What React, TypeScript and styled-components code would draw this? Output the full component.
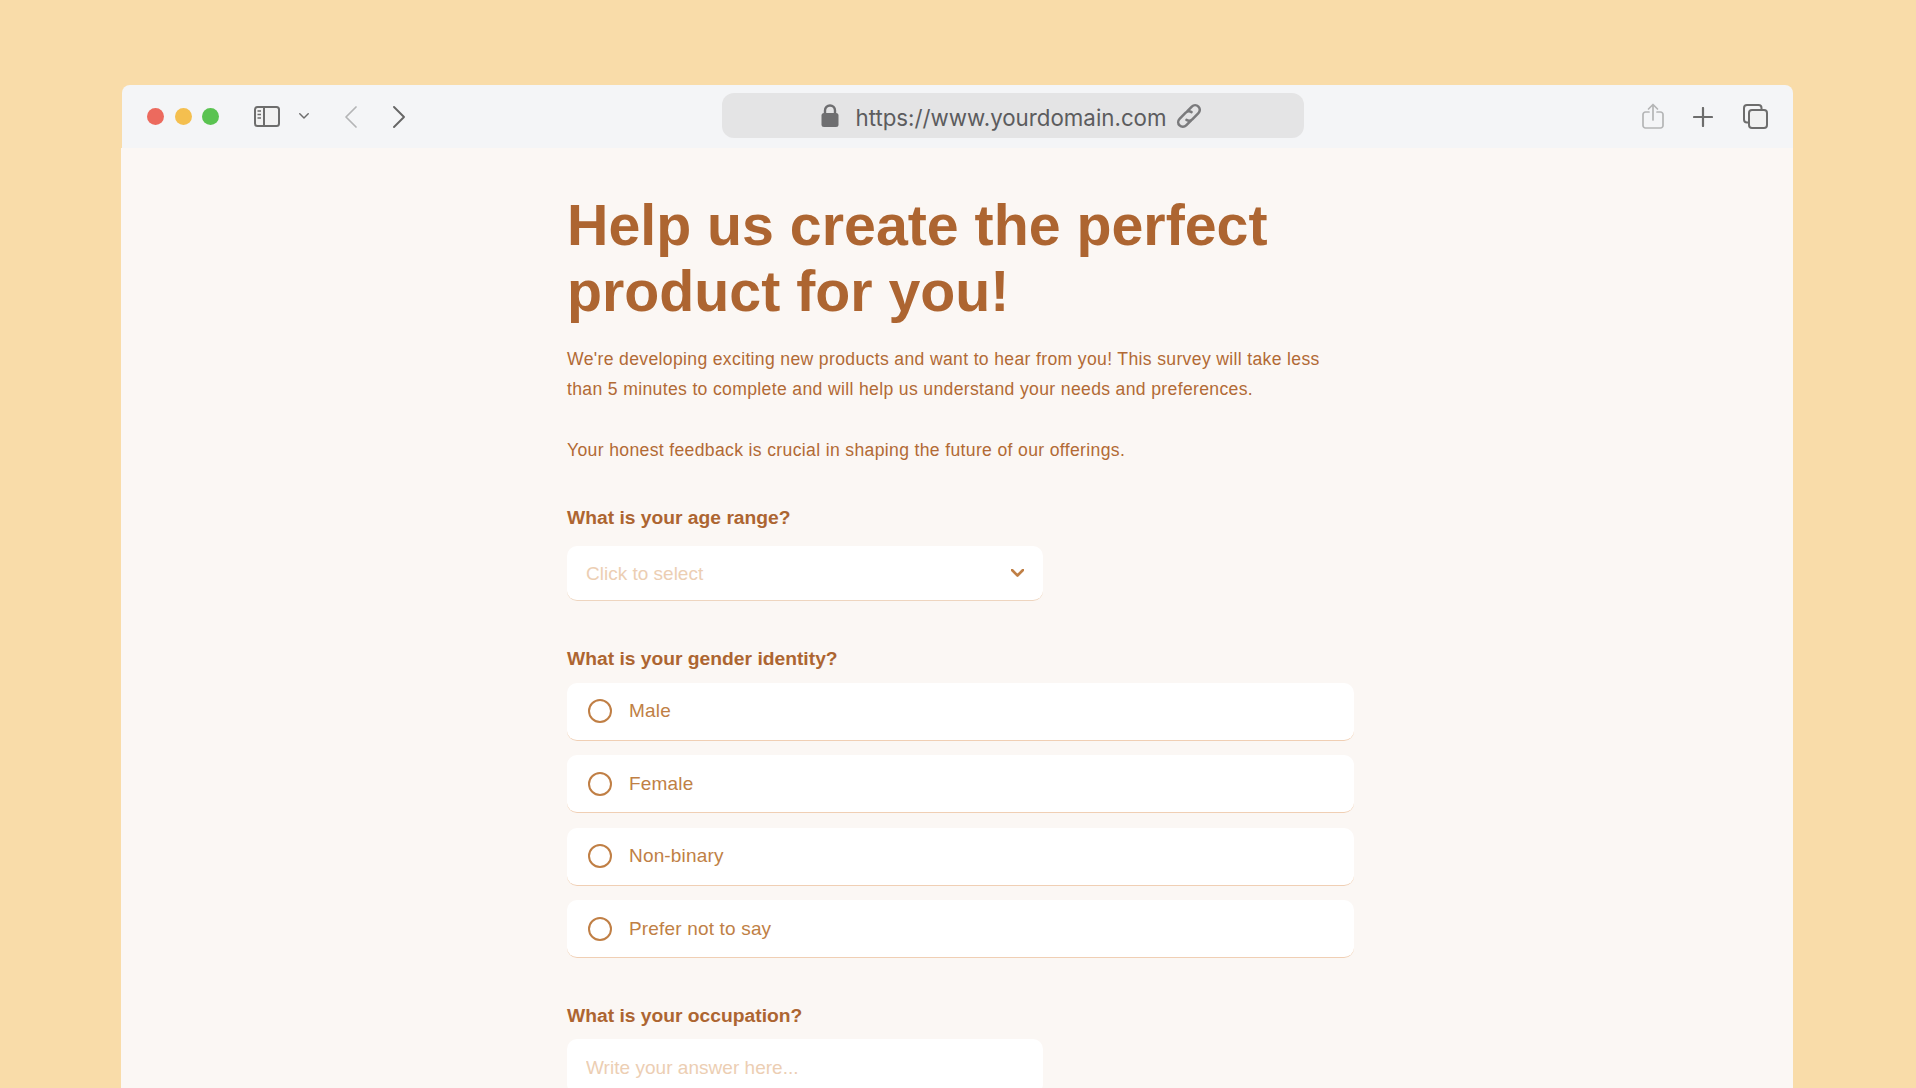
import React from 'react';
import styled, { createGlobalStyle } from 'styled-components';

const GlobalStyle = createGlobalStyle`
  html, body {
    margin: 0;
    height: 100%;
    overflow: hidden;
    background: #f9dca9;
  }
  #root {
    height: 100%;
  }
  * {
    box-sizing: border-box;
  }
`;

const Stage = styled.div`
  height: 100%;
  padding: 85px 123px 0 121px;
  overflow: hidden;
`;

const BrowserWindow = styled.div`
  width: 1672px;
  height: 1100px;
  display: flex;
  flex-direction: column;
`;

const Toolbar = styled.header`
  height: 63px;
  margin-left: 1px;
  border-radius: 8px 8px 0 0;
  background: #f4f5f7;
  display: grid;
  grid-template-columns: 600px 582px 1fr;
  align-items: center;
`;

const ToolGroup = styled.div`
  display: flex;
  align-items: center;
  padding-left: 25px;
`;

const Light = styled.span<{ $color: string }>`
  width: 17px;
  height: 17px;
  border-radius: 50%;
  background: ${({ $color }) => $color};
  margin-right: 10.5px;
`;

const IconSlot = styled.span<{ $left?: number }>`
  display: flex;
  align-items: center;
  justify-content: center;
  margin-left: ${({ $left = 0 }) => $left}px;
  line-height: 0;
`;

const AddressBar = styled.div`
  height: 45px;
  margin-top: -2px;
  border-radius: 12px;
  background: #e4e4e5;
  display: flex;
  align-items: center;
  justify-content: center;
  color: #5c5c5e;
  font-family: 'Inter', 'Liberation Sans', sans-serif;
  font-size: 22.3px;
`;

const AddressText = styled.span`
  margin: 3px 6px 0 16px;
`;

const RightTools = styled.div`
  display: flex;
  align-items: center;
  justify-content: flex-end;
  padding-right: 25px;
`;

const Content = styled.main`
  flex: 1;
  padding: 44px 439px 0 446px;
  background: #fbf7f4;
  color: #b26a35;
  font-family: 'Liberation Sans', Arial, sans-serif;
`;

const Title = styled.h1`
  margin: 0;
  font-size: 57.3px;
  line-height: 66px;
  font-weight: 700;
  color: #ad6531;
`;

const Intro = styled.p`
  margin: 20px 0 0;
  font-size: 17.6px;
  line-height: 30.4px;
  letter-spacing: 0.34px;
`;

const Field = styled.section<{ $top: number }>`
  margin-top: ${({ $top }) => $top}px;
`;

const Question = styled.h2<{ $gap: number }>`
  margin: 0 0 ${({ $gap }) => $gap}px;
  font-size: 19.25px;
  line-height: 24px;
  font-weight: 700;
  color: #ad6531;
`;

const SelectBox = styled.div`
  width: 476px;
  height: 55px;
  padding: 0 19px;
  border-radius: 10px;
  background: #fff;
  border-bottom: 1.5px solid #eed5bf;
  display: flex;
  align-items: center;
  justify-content: space-between;
  font-size: 19px;
  color: #ecceb3;
`;

const SelectValue = styled.span`
  padding-top: 2px;
`;

const OptionList = styled.div`
  display: flex;
  flex-direction: column;
  gap: 14.5px;
`;

const Option = styled.label`
  height: 58px;
  padding: 0 21px;
  border-radius: 10px;
  background: #fff;
  border-bottom: 1.5px solid #f0cfb4;
  display: flex;
  align-items: center;
  gap: 17px;
  font-size: 19px;
  letter-spacing: 0.17px;
  color: #c07f45;
`;

const Radio = styled.span`
  width: 24px;
  height: 24px;
  border-radius: 50%;
  border: 2.8px solid #c07f45;
`;

const TextAnswer = styled.input`
  display: block;
  width: 476px;
  height: 55px;
  padding: 2px 19px 0;
  border: 0;
  border-radius: 10px;
  background: #fff;
  outline: none;
  font-family: inherit;
  font-size: 19px;
  letter-spacing: 0.03px;
  &::placeholder {
    color: #ecceb3;
    opacity: 1;
  }
`;

const SidebarIcon = () => (
  <svg width="26" height="21" viewBox="0 0 26 21" fill="none">
    <rect x="1" y="1" width="24" height="19" rx="2.5" fill="#f2f2f2" stroke="#6d6d6d" stroke-width="2" />
    <path d="M10 1v19" stroke="#6d6d6d" stroke-width="2" />
    <path d="M3.500 5h3.500M3.500 8.500h3.500M3.500 12h3.500" stroke="#6d6d6d" stroke-width="1.600" />
  </svg>
);

const Chevron = ({ dir, color, size, width }: { dir: 'left' | 'right' | 'down'; color: string; size: number; width: number }) => {
  const paths = { left: 'M11 1 1 11l10 10', right: 'M1 1l10 10L1 21', down: 'M1 1l5.500 5.500L12 1' };
  const box = dir === 'down' ? '0 0 13 8' : '0 0 12 22';
  const ratio = dir === 'down' ? 8 / 13 : 22 / 12;
  return (
    <svg width={size} height={size * ratio} viewBox={box} fill="none">
      <path d={paths[dir]} stroke={color} stroke-width={width} stroke-linecap="round" stroke-linejoin="round" />
    </svg>
  );
};

const LockIcon = () => (
  <svg width="18" height="23" viewBox="0 0 18 23" fill="none">
    <path d="M4 10V6.500a5 5 0 0 1 10 0V10" stroke="#6e6e70" stroke-width="2.400" />
    <rect x="0.500" y="9" width="17" height="14" rx="2.500" fill="#6e6e70" />
  </svg>
);

const LinkIcon = () => (
  <svg width="32" height="32" viewBox="0 0 24 24" fill="none" stroke="#7a7a7c" stroke-width="1.900" stroke-linecap="round">
    <g transform="rotate(-45 12 12)">
      <path d="M10 15.500H5.500a3.500 3.500 0 0 1 0-7H12a3.500 3.500 0 0 1 3.400 2.800" />
      <path d="M14 8.500h4.500a3.500 3.500 0 0 1 0 7H12a3.500 3.500 0 0 1-3.400-2.800" />
    </g>
  </svg>
);

const ShareIcon = () => (
  <svg width="22" height="27" viewBox="0 0 22 27" fill="none" stroke="#b4b5b6" stroke-width="1.700" stroke-linecap="round" stroke-linejoin="round">
    <path d="M7 9H3.500A2.500 2.500 0 0 0 1 11.500v11A2.500 2.500 0 0 0 3.500 25h15a2.500 2.500 0 0 0 2.500-2.500v-11A2.500 2.500 0 0 0 18.500 9H15" />
    <path d="M11 17V1.500M6.500 6 11 1.500 15.500 6" />
  </svg>
);

const PlusIcon = () => (
  <svg width="20" height="20" viewBox="0 0 20 20" fill="none">
    <path d="M10 1v18M1 10h18" stroke="#6d6d6d" stroke-width="2.200" stroke-linecap="round" />
  </svg>
);

const CopyIcon = () => (
  <svg width="25" height="25" viewBox="0 0 25 25" fill="none" stroke="#6d6d6d" stroke-width="2">
    <path d="M5.500 18.500H4A3 3 0 0 1 1 15.500V4a3 3 0 0 1 3-3h11.500a3 3 0 0 1 3 3v1.500" />
    <rect x="6" y="6" width="18" height="18" rx="3" fill="#f1f1f1" />
  </svg>
);

const genderOptions = ['Male', 'Female', 'Non-binary', 'Prefer not to say'];

const App: React.FC = () => (
  <>
    <GlobalStyle />
    <Stage>
      <BrowserWindow>
        <Toolbar>
          <ToolGroup>
            <Light $color="#ec6a5e" />
            <Light $color="#f4bf4f" />
            <Light $color="#5ac351" />
            <IconSlot $left={24.5}><SidebarIcon /></IconSlot>
            <IconSlot $left={19}><Chevron dir="down" color="#6d6d6d" size={10} width={1.9} /></IconSlot>
            <IconSlot $left={35.5}><Chevron dir="left" color="#b4b5b6" size={12} width={1.7} /></IconSlot>
            <IconSlot $left={36.5}><Chevron dir="right" color="#666" size={12} width={1.9} /></IconSlot>
          </ToolGroup>
          <AddressBar>
            <LockIcon />
            <AddressText>https://www.yourdomain.com</AddressText>
            <LinkIcon />
          </AddressBar>
          <RightTools>
            <IconSlot><ShareIcon /></IconSlot>
            <IconSlot $left={29}><PlusIcon /></IconSlot>
            <IconSlot $left={30}><CopyIcon /></IconSlot>
          </RightTools>
        </Toolbar>
        <Content>
          <Title>Help us create the perfect product for you!</Title>
          <Intro>
            We're developing exciting new products and want to hear from you! This survey will take less
            <br />
            than 5 minutes to complete and will help us understand your needs and preferences.
            <br />
            <br />
            Your honest feedback is crucial in shaping the future of our offerings.
          </Intro>
          <Field $top={40}>
            <Question $gap={16}>What is your age range?</Question>
            <SelectBox>
              <SelectValue>Click to select</SelectValue>
              <Chevron dir="down" color="#c07f45" size={13} width={2.6} />
            </SelectBox>
          </Field>
          <Field $top={46}>
            <Question $gap={12}>What is your gender identity?</Question>
            <OptionList>
              {genderOptions.map((option) => (
                <Option key={option}>
                  <Radio />
                  {option}
                </Option>
              ))}
            </OptionList>
          </Field>
          <Field $top={46}>
            <Question $gap={11}>What is your occupation?</Question>
            <TextAnswer placeholder="Write your answer here..." />
          </Field>
        </Content>
      </BrowserWindow>
    </Stage>
  </>
);

export default App;
